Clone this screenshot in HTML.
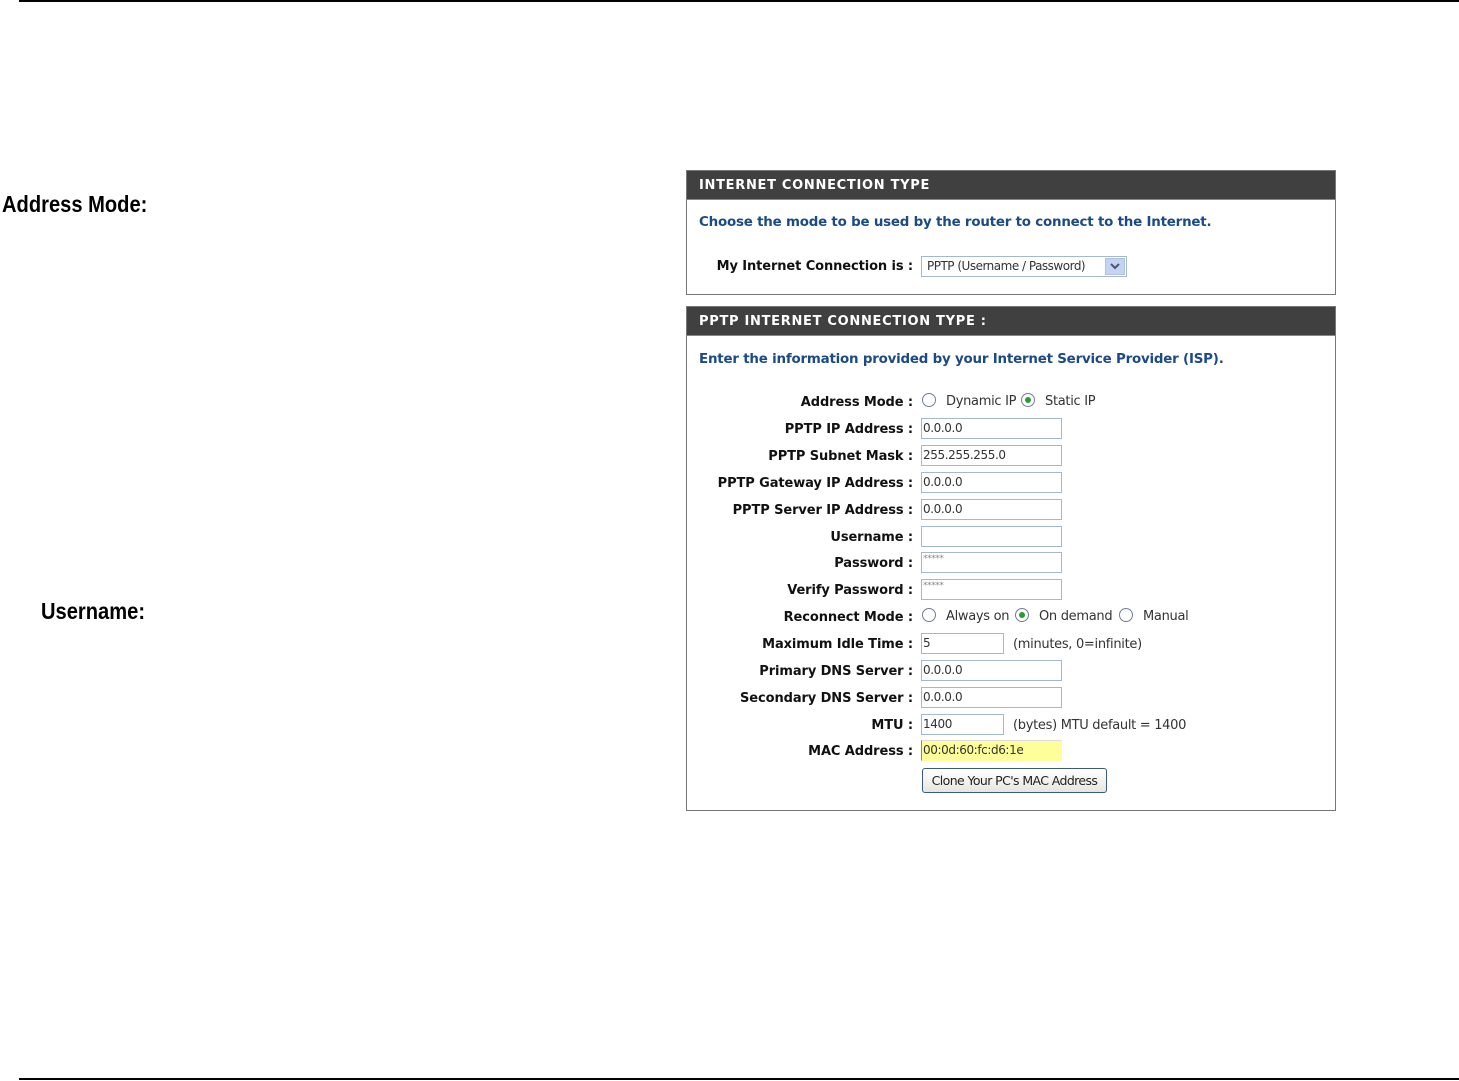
<!DOCTYPE html>
<html><head><meta charset="utf-8"><style>
*{margin:0;padding:0;box-sizing:border-box}
body{width:1459px;height:1081px;background:#fff;position:relative;overflow:hidden;font-family:"Liberation Sans",sans-serif}
.line{position:absolute;left:19px;right:0;height:2px;background:#000}
.big{position:absolute;font-weight:bold;font-size:23px;color:#000;transform:scaleX(0.875);transform-origin:left top;letter-spacing:0}
.box{position:absolute;left:686px;width:650px;border:1px solid #777;background:#fff}
.hd{background:#404040;color:#fff;font-weight:bold;font-size:13px;height:29px;line-height:30px;padding-left:12px;letter-spacing:0.7px;border-bottom:1px solid #888;font-family:"DejaVu Sans",sans-serif}
.intro{position:absolute;left:699px;color:#1c4a86;font-weight:bold;font-size:13.4px;white-space:nowrap;font-family:"DejaVu Sans",sans-serif;letter-spacing:-0.2px;margin-top:2px}
.lbl{position:absolute;right:546px;font-weight:bold;font-size:13px;color:#111;white-space:nowrap;font-family:"DejaVu Sans",sans-serif;letter-spacing:-0.1px;margin-top:2px}
.in{position:absolute;left:921px;width:141px;height:21px;border:1px solid #a7b8cb;background:#fff;font-size:12px;color:#333;padding-left:1px;line-height:19px;font-family:"DejaVu Sans",sans-serif;letter-spacing:-0.4px}
.sh{width:83px}
.t{position:absolute;font-size:13px;color:#333;white-space:nowrap;font-family:"DejaVu Sans",sans-serif;letter-spacing:-0.3px}
.r{position:absolute;width:14px;height:14px;border:1px solid #6e7f94;border-radius:50%;background:#fff}
.r.on::after{content:"";position:absolute;left:3px;top:3px;width:6px;height:6px;border-radius:50%;background:#2c9a3a}
</style></head><body>
<div class="line" style="top:0"></div>
<div class="line" style="top:1078px"></div>
<div class="big" style="left:2px;top:191px">Address Mode:</div>
<div class="big" style="left:41px;top:598px">Username:</div>

<div class="box" style="top:170px;height:125px"><div class="hd">INTERNET CONNECTION TYPE</div></div>
<div class="intro" style="top:213px">Choose the mode to be used by the router to connect to the Internet.</div>
<div class="lbl" style="top:257px">My Internet Connection is :</div>
<div style="position:absolute;left:921px;top:256px;width:206px;height:21px;border:1px solid #a7b8cb;background:#fff"></div>
<div class="t" style="left:927px;top:259px;font-size:12px;letter-spacing:-0.5px">PPTP (Username / Password)</div>
<div style="position:absolute;left:1105px;top:258px;width:20px;height:17px;background:#c5d3f2;border:1px solid #b0c0e6"></div>
<svg style="position:absolute;left:1109px;top:262px" width="12" height="9"><path d="M2 2 L6 6 L10 2" stroke="#4a5670" stroke-width="2" fill="none"/></svg>

<div class="box" style="top:306px;height:505px"><div class="hd">PPTP INTERNET CONNECTION TYPE :</div></div>
<div class="intro" style="top:350px">Enter the information provided by your Internet Service Provider (ISP).</div>

<div class="lbl" style="top:393px">Address Mode :</div>
<div class="r" style="left:922px;top:393px"></div><div class="t" style="left:946px;top:394px">Dynamic IP</div>
<div class="r on" style="left:1021px;top:393px"></div><div class="t" style="left:1045px;top:394px">Static IP</div>

<div class="lbl" style="top:420px">PPTP IP Address :</div><div class="in" style="top:418px">0.0.0.0</div>
<div class="lbl" style="top:447px">PPTP Subnet Mask :</div><div class="in" style="top:445px">255.255.255.0</div>
<div class="lbl" style="top:474px">PPTP Gateway IP Address :</div><div class="in" style="top:472px">0.0.0.0</div>
<div class="lbl" style="top:501px">PPTP Server IP Address :</div><div class="in" style="top:499px">0.0.0.0</div>
<div class="lbl" style="top:528px">Username :</div><div class="in" style="top:526px"></div>
<div class="lbl" style="top:554px">Password :</div><div class="in" style="top:552px;font-size:9px;line-height:12px;color:#888">*****</div>
<div class="lbl" style="top:581px">Verify Password :</div><div class="in" style="top:579px;font-size:9px;line-height:12px;color:#888">*****</div>

<div class="lbl" style="top:608px">Reconnect Mode :</div>
<div class="r" style="left:922px;top:608px"></div><div class="t" style="left:946px;top:609px">Always on</div>
<div class="r on" style="left:1015px;top:608px"></div><div class="t" style="left:1039px;top:609px">On demand</div>
<div class="r" style="left:1119px;top:608px"></div><div class="t" style="left:1143px;top:609px">Manual</div>

<div class="lbl" style="top:635px">Maximum Idle Time :</div><div class="in sh" style="top:633px">5</div>
<div class="t" style="left:1013px;top:637px">(minutes, 0=infinite)</div>
<div class="lbl" style="top:662px">Primary DNS Server :</div><div class="in" style="top:660px">0.0.0.0</div>
<div class="lbl" style="top:689px">Secondary DNS Server :</div><div class="in" style="top:687px">0.0.0.0</div>
<div class="lbl" style="top:716px">MTU :</div><div class="in sh" style="top:714px">1400</div>
<div class="t" style="left:1013px;top:718px">(bytes) MTU default = 1400</div>
<div class="lbl" style="top:742px">MAC Address :</div><div class="in" style="top:740px;background:#ffff99;border-color:#ddd #ffff99 #ffff99 #888">00:0d:60:fc:d6:1e</div>
<div style="position:absolute;left:922px;top:768px;width:185px;height:25px;border:1px solid #3c5a80;border-radius:3px;background:linear-gradient(#fff,#e6e6e0);font-size:12.5px;color:#222;text-align:center;line-height:23px;font-family:'DejaVu Sans',sans-serif;letter-spacing:-0.6px">Clone Your PC's MAC Address</div>
</body></html>
